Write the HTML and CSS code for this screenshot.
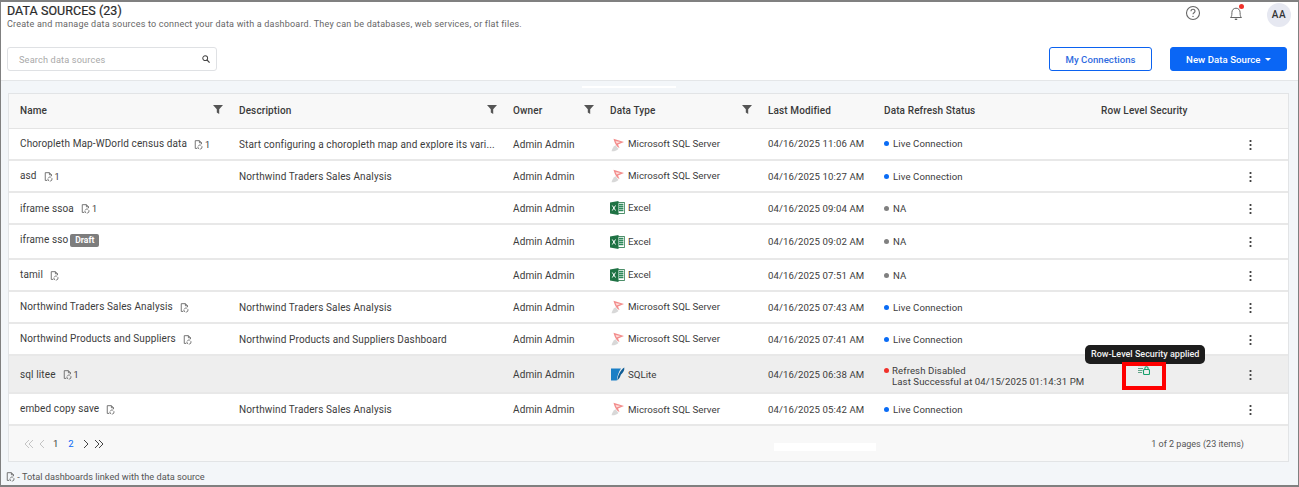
FILE: index.html
```html
<!DOCTYPE html>
<html lang="en">
<head>
    <meta charset="UTF-8">
    <title>Data Sources</title>
    <link rel="stylesheet" href="styles.css">
</head>
<body>
    <svg class="icon-defs" width="0" height="0">
        <symbol id="linked" viewBox="0 0 10 11">
            <path d="M6 .7H1.400v8.600h2.200M6 .7l2.300 2.300v1.600M6 .7V3h2.300" fill="none" stroke="#666" stroke-width="1"/>
            <circle cx="6.600" cy="7.800" r="2.300" fill="none" stroke="#666" stroke-width="1" stroke-dasharray="3 1"/>
        </symbol>
        <symbol id="funnel" viewBox="0 0 10 9">
            <path d="M0 0h10L6.200 4.200V9L3.800 7.600V4.200z" fill="#555"/>
        </symbol>
        <symbol id="mssql" viewBox="0 0 14 14">
            <path d="M3 .8L13.500 4 7.500 6.500 9 10C6 9 4 5 3 .8z" fill="#f38d8c"/>
            <path d="M5 3l5 1.100-3.800 1.400z" fill="#fde0de"/>
            <path d="M1 13.300C1.600 10.500 3 8.500 5 7.200L8 11c-2 1.800-4.500 2.600-7 2.300z" fill="#d8d8d8"/>
        </symbol>
        <symbol id="excel" viewBox="0 0 15 14">
            <path d="M5 1.500h9.600v11H5z" fill="#fff" stroke="#1f7244" stroke-width=".8"/>
            <path d="M9 3.500h4.400M9 5.500h4.400M9 7.500h4.400M9 9.500h4.400" stroke="#2f8a5c" stroke-width="1.300"/>
            <path d="M0 1.400L8.500 0v14L0 12.600z" fill="#1f7244"/>
            <path d="M2.300 4.500l3.200 5M5.500 4.500l-3.200 5" stroke="#fff" stroke-width="1"/>
        </symbol>
        <symbol id="sqlite" viewBox="0 0 14 14">
            <path d="M.5 1.500h10C8 5 6.800 9 6.300 13.500H.5z" fill="#1a7fc6"/>
            <path d="M6.800 13.500c.3-4.500 3-10.500 7-13 .5 3-1.500 5.500-3.500 7.300-.5 2-1.500 4-3.500 5.700z" fill="#0f5d96"/>
        </symbol>
    </svg>

    <div class="page">
        <header class="top">
            <div class="top-row">
                <div>
                    <h1>DATA SOURCES (23)</h1>
                    <p class="subtitle">Create and manage data sources to connect your data with a dashboard. They can be databases, web services, or flat files.</p>
                </div>
                <div class="top-icons">
                    <svg class="top-icon" viewBox="0 0 16 16"><circle cx="8" cy="8" r="6.500" fill="none" stroke="#666" stroke-width="1.100"/><path d="M6 6.300c0-2.700 4-2.700 4 0 0 1.500-2 1.500-2 3" fill="none" stroke="#666" stroke-width="1.100"/><circle cx="8" cy="11.400" r=".7" fill="#666"/></svg>
                    <span class="bell">
                        <svg class="top-icon" viewBox="0 0 16 16"><path d="M2.500 12.500c1.200-1 1.400-2.200 1.400-5 0-2.500 1.700-4.300 4.100-4.300s4.100 1.800 4.100 4.300c0 2.800.2 4 1.400 5z" fill="none" stroke="#666" stroke-width="1"/><path d="M6.800 14.300h2.400" stroke="#666" stroke-width="1.400"/></svg>
                        <i class="bell-dot"></i>
                    </span>
                    <span class="avatar">AA</span>
                </div>
            </div>
            <div class="tools-row">
                <div class="search">
                    <span>Search data sources</span>
                    <svg width="8" height="8" viewBox="0 0 10 10"><circle cx="4" cy="4" r="3" fill="none" stroke="#444" stroke-width="1.300"/><path d="M6.300 6.300L9.500 9.500" stroke="#444" stroke-width="1.500"/></svg>
                </div>
                <div class="actions">
                    <button class="btn btn-outline">My Connections</button>
                    <button class="btn btn-primary">New Data Source <i class="caret"></i></button>
                </div>
            </div>
        </header>

        <main class="content">
            <span class="top-strip"></span>
            <div class="card">
                <table>
                    <colgroup>
                        <col class="c-name"><col class="c-desc"><col class="c-owner"><col class="c-type">
                        <col class="c-mod"><col class="c-status"><col class="c-rls"><col class="c-menu">
                    </colgroup>
                    <thead>
                        <tr>
                            <th><div class="th-in">Name <svg class="funnel"><use href="#funnel"/></svg></div></th>
                            <th><div class="th-in">Description <svg class="funnel"><use href="#funnel"/></svg></div></th>
                            <th><div class="th-in">Owner <svg class="funnel"><use href="#funnel"/></svg></div></th>
                            <th><div class="th-in">Data Type <svg class="funnel"><use href="#funnel"/></svg></div></th>
                            <th>Last Modified</th>
                            <th>Data Refresh Status</th>
                            <th>Row Level Security</th>
                            <th></th>
                        </tr>
                    </thead>
                    <tbody>
                        <tr class="h32">
                            <td><span class="nudge">Choropleth Map-WDorld census data</span><span class="links"><svg class="link-icon"><use href="#linked"/></svg>1</span></td>
                            <td>Start configuring a choropleth map and explore its vari...</td>
                            <td>Admin Admin</td>
                            <td><div class="type"><svg class="type-icon"><use href="#mssql"/></svg><span class="nudge">Microsoft SQL Server</span></div></td>
                            <td class="date">04/16/2025 11:06 AM</td>
                            <td class="date"><i class="dot blue"></i>Live Connection</td>
                            <td></td>
                            <td class="menu"><b></b></td>
                        </tr>
                        <tr class="h32">
                            <td><span class="nudge">asd</span><span class="links"><svg class="link-icon"><use href="#linked"/></svg>1</span></td>
                            <td>Northwind Traders Sales Analysis</td>
                            <td>Admin Admin</td>
                            <td><div class="type"><svg class="type-icon"><use href="#mssql"/></svg><span class="nudge">Microsoft SQL Server</span></div></td>
                            <td class="date">04/16/2025 10:27 AM</td>
                            <td class="date"><i class="dot blue"></i>Live Connection</td>
                            <td></td>
                            <td class="menu"><b></b></td>
                        </tr>
                        <tr class="h32">
                            <td>iframe ssoa<span class="links"><svg class="link-icon"><use href="#linked"/></svg>1</span></td>
                            <td></td>
                            <td>Admin Admin</td>
                            <td><div class="type"><svg class="type-icon"><use href="#excel"/></svg><span class="nudge">Excel</span></div></td>
                            <td class="date">04/16/2025 09:04 AM</td>
                            <td class="date"><i class="dot grey"></i>NA</td>
                            <td></td>
                            <td class="menu"><b></b></td>
                        </tr>
                        <tr class="h35">
                            <td><span class="nudge">iframe sso</span><span class="draft">Draft</span></td>
                            <td></td>
                            <td>Admin Admin</td>
                            <td><div class="type"><svg class="type-icon"><use href="#excel"/></svg><span>Excel</span></div></td>
                            <td class="date">04/16/2025 09:02 AM</td>
                            <td class="date"><i class="dot grey"></i>NA</td>
                            <td></td>
                            <td class="menu"><b></b></td>
                        </tr>
                        <tr class="h32">
                            <td><span class="nudge">tamil</span><span class="links"><svg class="link-icon"><use href="#linked"/></svg></span></td>
                            <td></td>
                            <td>Admin Admin</td>
                            <td><div class="type"><svg class="type-icon"><use href="#excel"/></svg><span class="nudge">Excel</span></div></td>
                            <td class="date">04/16/2025 07:51 AM</td>
                            <td class="date"><i class="dot grey"></i>NA</td>
                            <td></td>
                            <td class="menu"><b></b></td>
                        </tr>
                        <tr class="h32">
                            <td><span class="nudge">Northwind Traders Sales Analysis</span><span class="links"><svg class="link-icon"><use href="#linked"/></svg></span></td>
                            <td>Northwind Traders Sales Analysis</td>
                            <td>Admin Admin</td>
                            <td><div class="type"><svg class="type-icon"><use href="#mssql"/></svg><span class="nudge">Microsoft SQL Server</span></div></td>
                            <td class="date">04/16/2025 07:43 AM</td>
                            <td class="date"><i class="dot blue"></i>Live Connection</td>
                            <td></td>
                            <td class="menu"><b></b></td>
                        </tr>
                        <tr class="h32">
                            <td><span class="nudge">Northwind Products and Suppliers</span><span class="links"><svg class="link-icon"><use href="#linked"/></svg></span></td>
                            <td>Northwind Products and Suppliers Dashboard</td>
                            <td>Admin Admin</td>
                            <td><div class="type"><svg class="type-icon"><use href="#mssql"/></svg><span class="nudge">Microsoft SQL Server</span></div></td>
                            <td class="date">04/16/2025 07:41 AM</td>
                            <td class="date"><i class="dot blue"></i>Live Connection</td>
                            <td></td>
                            <td class="menu"><b></b></td>
                        </tr>
                        <tr class="h38 active">
                            <td>sql litee<span class="links"><svg class="link-icon"><use href="#linked"/></svg>1</span></td>
                            <td></td>
                            <td>Admin Admin</td>
                            <td><div class="type"><svg class="type-icon"><use href="#sqlite"/></svg><span>SQLite</span></div></td>
                            <td class="date">04/16/2025 06:38 AM</td>
                            <td class="date">
                                <div class="status-two">
                                    <i class="dot red"></i>
                                    <div>Refresh Disabled<br>Last Successful at 04/15/2025 01:14:31 PM</div>
                                </div>
                            </td>
                            <td class="rls">
                                <svg class="rls-icon" viewBox="0 0 12 10"><path d="M0 1h9" stroke="#bcdccf" stroke-width=".9"/><path d="M0 3.500h5M0 5.500h4.500M0 7.500h4" stroke="#4f9a7c" stroke-width=".9"/><rect x="5.500" y="4.500" width="6" height="5" rx="1" fill="none" stroke="#16a06c" stroke-width="1.100"/><path d="M6.900 4.500V3.300c0-2 3.200-2 3.200 0v1.200" fill="none" stroke="#16a06c" stroke-width="1.100"/></svg>
                                <span class="tooltip">Row-Level Security applied</span>
                                <span class="red-box"></span>
                            </td>
                            <td class="menu"><b></b></td>
                        </tr>
                        <tr class="h32">
                            <td><span class="nudge">embed copy save</span><span class="links"><svg class="link-icon"><use href="#linked"/></svg></span></td>
                            <td>Northwind Traders Sales Analysis</td>
                            <td>Admin Admin</td>
                            <td><div class="type"><svg class="type-icon"><use href="#mssql"/></svg><span>Microsoft SQL Server</span></div></td>
                            <td class="date">04/16/2025 05:42 AM</td>
                            <td class="date"><i class="dot blue"></i>Live Connection</td>
                            <td></td>
                            <td class="menu"><b></b></td>
                        </tr>
                    </tbody>
                </table>
                <div class="pager">
                    <div class="pages">
                        <svg width="21" height="10" viewBox="0 0 21 10"><path d="M5 1L1 5l4 4M9 1L5 5l4 4M20 1l-4 4 4 4" fill="none" stroke="#c4c4c4" stroke-width="1"/></svg>
                        <span class="num">1</span>
                        <span class="num current">2</span>
                        <svg width="21" height="10" viewBox="0 0 21 10"><path d="M1 1l4 4-4 4M12 1l4 4-4 4M16 1l4 4-4 4" fill="none" stroke="#444" stroke-width="1"/></svg>
                    </div>
                    <span class="white-strip"></span>
                    <span>1 of 2 pages (23 items)</span>
                </div>
            </div>
            <p class="legend"><svg class="link-icon"><use href="#linked"/></svg> - Total dashboards linked with the data source</p>
        </main>
    </div>
</body>
</html>
```

FILE: styles.css
```css
* {
    box-sizing: border-box;
}

body {
    margin: 0;
    height: 487px;
    overflow: hidden;
    font-family: Roboto, 'Liberation Sans', sans-serif;
    font-size: 10px;
    letter-spacing: 0.12px;
    color: #3c3c3c;
    background: #f3f6f9;
}

.icon-defs {
    position: absolute;
}

.page {
    height: 487px;
    border: 1px solid #808080;
    border-bottom-width: 2px;
    border-top-width: 2px;
    display: flex;
    flex-direction: column;
}

.top {
    height: 79px;
    background: #fff;
    border-bottom: 1px solid #e4e6e8;
    padding: 1px 6px 0 6px;
}

.top-row {
    display: flex;
    justify-content: space-between;
    height: 44px;
}

h1 {
    margin: 0;
    font-size: 12.5px;
    font-weight: 400;
    line-height: 15px;
    letter-spacing: 0.05px;
    color: #2a2a2a;
    -webkit-text-stroke: 0.2px #2a2a2a;
}

.subtitle {
    margin: 0;
    font-size: 9px;
    line-height: 12px;
    letter-spacing: 0.21px;
    color: #666;
}

.top-icons {
    display: flex;
    align-items: flex-start;
    margin: 1px 1px 0 0;
}

.top-icon {
    width: 16px;
    height: 16px;
    display: block;
}

.top-icons > .top-icon {
    margin-top: 1px;
}

.bell {
    position: relative;
    margin: 1px 0 0 27px;
}

.bell-dot {
    position: absolute;
    top: -1px;
    right: 0;
    width: 5px;
    height: 5px;
    border-radius: 50%;
    background: #f0312b;
}

.avatar {
    width: 24px;
    height: 24px;
    margin: -1px 0 0 23px;
    border-radius: 50%;
    background: #e6e8f1;
    font-size: 10px;
    font-weight: 500;
    letter-spacing: 0.6px;
    line-height: 24px;
    text-align: center;
    color: #333;
}

.tools-row {
    display: flex;
    justify-content: space-between;
    align-items: flex-start;
}

.search {
    width: 210px;
    height: 24px;
    border: 1px solid #dfe1e4;
    border-radius: 3px;
    padding: 0 6px 0 11px;
    display: flex;
    align-items: center;
    justify-content: space-between;
    font-size: 9.2px;
    letter-spacing: 0.15px;
    color: #a9a9a9;
}

.actions {
    display: flex;
    gap: 18px;
    margin-right: 5px;
}

.btn {
    height: 24px;
    border-radius: 3px;
    font-family: inherit;
    font-size: 9.6px;
    font-weight: 500;
    letter-spacing: 0.05px;
    padding: 0;
}

.btn-outline {
    width: 103px;
    background: #fff;
    border: 1px solid #0b62f0;
    color: #2f6be0;
}

.btn-primary {
    width: 117px;
    background: #0a66f5;
    border: 1px solid #0a66f5;
    color: #fff;
}

.caret {
    display: inline-block;
    margin-left: 2px;
    vertical-align: 2px;
    border-left: 3px solid transparent;
    border-right: 3px solid transparent;
    border-top: 3px solid #fff;
}

.content {
    flex: 1;
    position: relative;
    padding: 12px 9px 0 7px;
}

.top-strip {
    position: absolute;
    left: 581px;
    top: 5px;
    width: 94px;
    height: 2px;
    background: #fff;
}

.card {
    border: 1px solid #e2e4e6;
    background: #f8f8f8;
    width: 1281px;
}

table {
    width: 1279px;
    border-collapse: collapse;
    table-layout: fixed;
}

.c-name { width: 219px; }
.c-desc { width: 274px; }
.c-owner { width: 97px; }
.c-type { width: 158px; }
.c-mod { width: 116px; }
.c-status { width: 217px; }
.c-rls { width: 140px; }
.c-menu { width: 58px; }

th {
    height: 34px;
    padding: 0 11px;
    text-align: left;
    font-weight: 500;
    font-size: 10px;
    color: #3a3a3a;
    border-bottom: 1px solid #e4e4e4;
}

.th-in {
    display: flex;
    justify-content: space-between;
    align-items: center;
}

.funnel {
    width: 10px;
    height: 9px;
    margin: -3px -6px 0 0;
}

td {
    padding: 0 11px;
    background: #fff;
    border-bottom: 2px solid #e8e8e8;
    white-space: nowrap;
}

tbody tr:first-child td:not(.date) {
    padding-top: 2px;
}

td.date {
    font-size: 9.6px;
    letter-spacing: 0.1px;
}

.h32 td { height: 32px; }
.h35 td { height: 35px; }
.h38 td { height: 38px; }

tr.active td {
    background: #eeeeee;
}

.nudge {
    position: relative;
    top: -1px;
}

.links {
    margin-left: 7px;
    font-size: 9px;
}

.link-icon {
    width: 9px;
    height: 10px;
    margin-right: 2px;
    vertical-align: -2px;
}

.draft {
    display: inline-block;
    margin-left: 2px;
    padding: 0 5px;
    height: 13px;
    line-height: 13px;
    border-radius: 2px;
    background: #7d7d7d;
    color: #fff;
    font-size: 8.5px;
    font-weight: 700;
    letter-spacing: 0;
    position: relative;
    top: -1px;
}

.type {
    display: flex;
    align-items: center;
    font-size: 9.75px;
    letter-spacing: 0;
}

.type-icon {
    width: 15px;
    height: 14px;
    margin-right: 3px;
    flex: none;
}

.dot {
    display: inline-block;
    width: 5px;
    height: 5px;
    margin-right: 4px;
    border-radius: 50%;
    vertical-align: 1px;
}

.blue { background: #0a6cf5; }
.grey { background: #808080; }
.red { background: #f0302a; }

.status-two {
    display: flex;
    align-items: flex-start;
    line-height: 11px;
    margin-top: 3px;
}

.status-two .dot {
    flex: none;
    margin: 3px 3px 0 0;
}

.rls {
    position: relative;
}

.rls-icon {
    display: block;
    width: 12px;
    height: 10px;
    margin: -8px 0 0 37px;
}

.tooltip {
    position: absolute;
    top: -11px;
    left: -5px;
    height: 19px;
    padding: 0 6px;
    line-height: 19px;
    border-radius: 5px;
    background: #1d1d1d;
    color: #f2f2f2;
    font-size: 9px;
    font-weight: 500;
    letter-spacing: 0;
}

.red-box {
    position: absolute;
    top: 6px;
    left: 32px;
    width: 44px;
    height: 28px;
    border: 4px solid #f00;
}

.menu b {
    display: block;
    width: 3px;
    height: 11px;
    margin-left: 8px;
    background: radial-gradient(circle at center, #444 1px, transparent 1.2px) 0 0 / 3px 4px;
}

.pager {
    position: relative;
    height: 35px;
    padding: 0 44px 0 15px;
    display: flex;
    justify-content: space-between;
    align-items: center;
    color: #555;
    font-size: 9px;
    letter-spacing: 0;
}

.pages {
    display: flex;
    align-items: center;
    font-size: 9.5px;
}

.num {
    margin-left: 8px;
    color: #3c3c3c;
}

.num.current {
    margin: 0 9px 0 10px;
    color: #0a66f5;
}

.white-strip {
    position: absolute;
    left: 765px;
    top: 17px;
    width: 102px;
    height: 8px;
    background: #fff;
}

.legend {
    margin: 9px 0 0 -2px;
    font-size: 9.2px;
    letter-spacing: 0;
    color: #555;
}

.legend .link-icon {
    margin-right: 0;
}
```
